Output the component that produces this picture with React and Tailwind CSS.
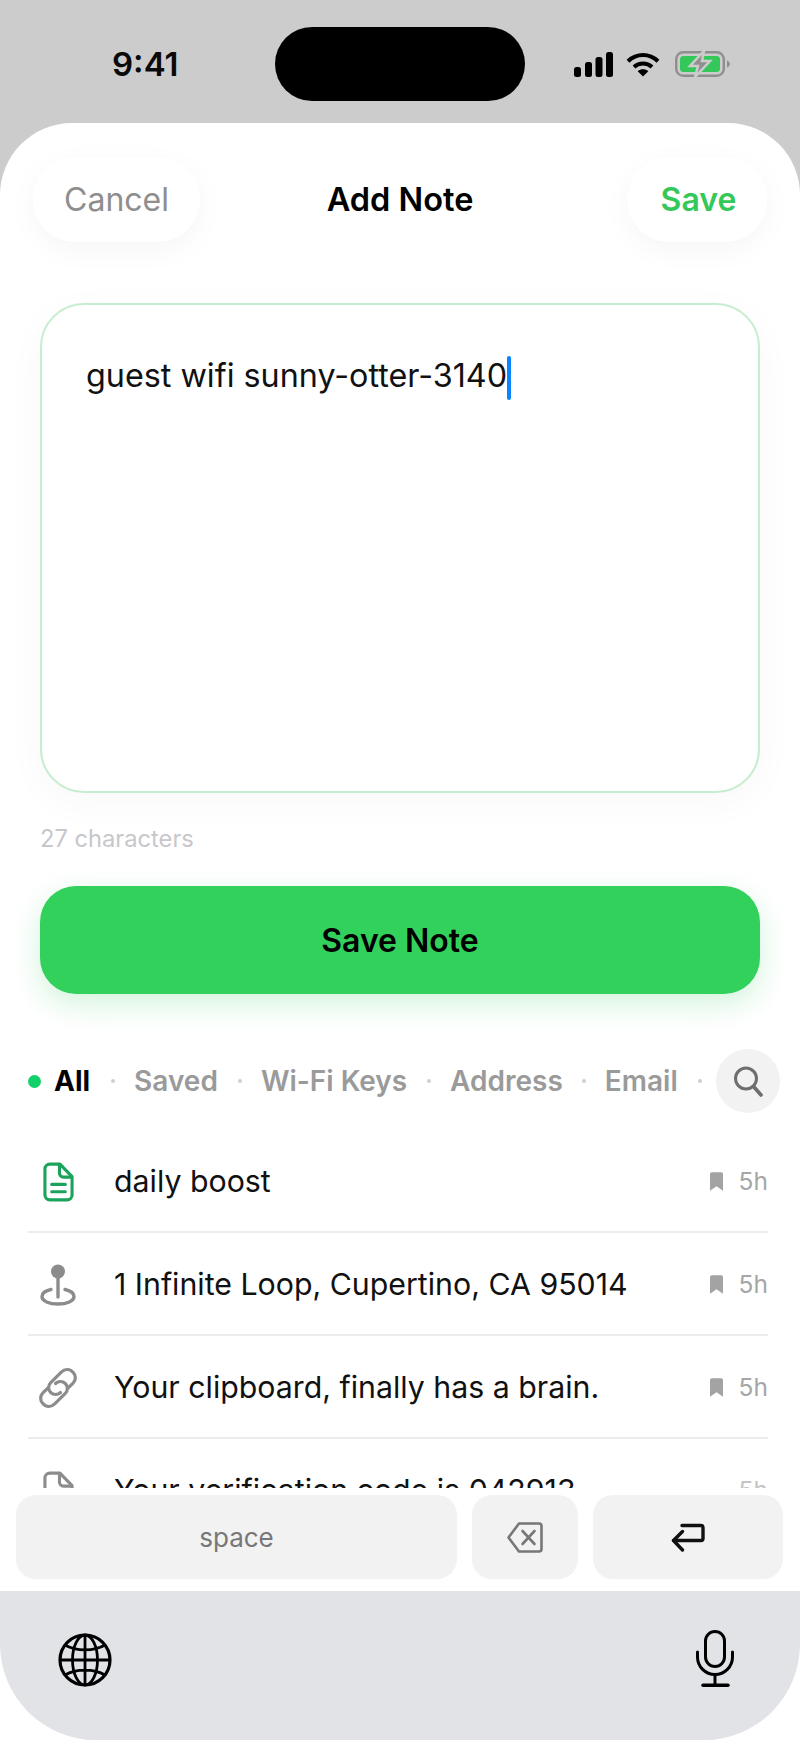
import React from "react";

const font = { fontFamily: "Inter, 'Liberation Sans', sans-serif" };

function Signal() {
  return (
    <svg width="39" height="25" viewBox="0 0 39 25" fill="#000">
      <rect x="0" y="15" width="7" height="10" rx="2.500" />
      <rect x="11" y="10" width="7" height="15" rx="2.500" />
      <rect x="21.500" y="5" width="7" height="20" rx="2.500" />
      <rect x="32" y="0" width="7" height="25" rx="2.500" />
    </svg>
  );
}
function Wifi() {
  return (
    <svg width="34" height="25" viewBox="0 0 34 25" fill="none" stroke="#000" strokeWidth="4">
      <path d="M2 9.200C10.500 1 23.500 1 32 9.200" />
      <path d="M8 15C13 10.400 21 10.400 26 15" />
      <path d="M17 24.500L11.700 19.200C14.700 16.600 19.300 16.600 22.300 19.200Z" fill="#000" stroke="none" />
    </svg>
  );
}
function Battery() {
  return (
    <svg width="56" height="26" viewBox="0 0 56 26" fill="none">
      <rect x="1.200" y="1.200" width="47.600" height="23.600" rx="7" stroke="#8f8f8f" strokeWidth="2.400" />
      <rect x="5" y="5" width="40" height="16" rx="3.500" fill="#34c759" />
      <path d="M52 9.500c1.800.5 2.800 2 2.800 3.500s-1 3-2.800 3.500z" fill="#8f8f8f" />
      <path d="M29 0L15 15h8l-3 11L35 10h-8z" fill="#8f8f8f" stroke="#cccccc" strokeWidth="2.500" />
    </svg>
  );
}
function DocIcon({ color }) {
  return (
    <svg width="31" height="40" viewBox="0 0 32 41" fill="none" stroke={color} strokeWidth="3.200" strokeLinejoin="round" strokeLinecap="round">
      <path d="M7 2h10.500L30 15v19a5 5 0 0 1-5 5H7a5 5 0 0 1-5-5V7a5 5 0 0 1 5-5z" />
      <path d="M17 2.500v9a4 4 0 0 0 4 4h8.500" />
      <path d="M9 23h14M9 30.500h14" />
    </svg>
  );
}
function PinIcon() {
  return (
    <svg width="36" height="42" viewBox="0 0 36 42" fill="none" stroke="#8c8c8c">
      <path d="M11 25.500C5.500 26.700 2 29 2 32.500C2 37 9 40 18 40s16-3 16-7.500c0-3.500-3.500-5.800-9-7" strokeWidth="3.400" strokeLinecap="round" />
      <path d="M18 12v21" strokeWidth="3.400" strokeLinecap="round" />
      <circle cx="18" cy="7.500" r="7" fill="#8c8c8c" stroke="none" />
    </svg>
  );
}
function LinkIcon() {
  return (
    <svg width="42" height="42" viewBox="0 0 42 42" fill="none" stroke="#8c8c8c" strokeWidth="3.200">
      <path d="M18.500 16.500a7 7 0 0 1 9.800 0a7 7 0 0 1 0 9.900L17.500 37a7.600 7.600 0 0 1-11.600-.4a7.600 7.600 0 0 1 0-10.800L11 21" strokeLinecap="round" />
      <path d="M23.500 25.500a7 7 0 0 1-9.800 0a7 7 0 0 1 0-9.900L24.500 5a7.600 7.600 0 0 1 11.600.4a7.600 7.600 0 0 1 0 10.800L31 21" strokeLinecap="round" />
    </svg>
  );
}
function Bookmark() {
  return (
    <svg width="13" height="19" viewBox="0 0 14 20" fill="#a3a3a3">
      <path d="M2 0h10a2 2 0 0 1 2 2v18l-7-5-7 5V2a2 2 0 0 1 2-2z" />
    </svg>
  );
}
function SearchIcon() {
  return (
    <svg width="30" height="32" viewBox="0 0 30 32" fill="none" stroke="#6e6e6e" strokeWidth="3" strokeLinecap="round">
      <circle cx="13" cy="13.500" r="10.500" />
      <path d="M21 22l7 8" strokeWidth="3.600" />
    </svg>
  );
}
function Backspace() {
  return (
    <svg width="36" height="31" viewBox="0 0 36 31" fill="none" stroke="#777" strokeWidth="2.600" strokeLinejoin="round" strokeLinecap="round">
      <path d="M12 1.500h20a2.500 2.500 0 0 1 2.500 2.500v23a2.500 2.500 0 0 1-2.500 2.500H12L1.500 15.500z" />
      <path d="M15.500 9l12 13M27.500 9l-12 13" />
    </svg>
  );
}
function ReturnIcon() {
  return (
    <svg width="34" height="29" viewBox="0 0 34 29" fill="none" stroke="#111" strokeWidth="3.400" strokeLinecap="round" strokeLinejoin="round">
      <path d="M11 2.500h19a2 2 0 0 1 2 2v11a2 2 0 0 1-2 2H2.500" />
      <path d="M11.500 8.500l-9 9 9 9.500" />
    </svg>
  );
}
function Globe() {
  return (
    <svg width="54" height="54" viewBox="0 0 54 54" fill="none" stroke="#000" strokeWidth="2.800">
      <circle cx="27" cy="27" r="25" strokeWidth="3.200" />
      <ellipse cx="27" cy="27" rx="12.500" ry="25" />
      <path d="M27 2v50M2 27h50M7 12c11 6.500 29 6.500 40 0M7 42c11-6.500 29-6.500 40 0" />
    </svg>
  );
}
function Mic() {
  return (
    <svg width="38" height="57" viewBox="0 0 38 57" fill="none" stroke="#000" strokeWidth="3" strokeLinecap="round">
      <rect x="9.500" y="1.500" width="19" height="35" rx="9.500" />
      <path d="M1.500 22v5a17.500 17.500 0 0 0 35 0v-5" />
      <path d="M19 45v10" />
      <path d="M7 55.200h25" strokeWidth="3.400" />
    </svg>
  );
}

function Dot({ ml }) {
  return <span className={`block w-[4px] h-[4px] rounded-full bg-[#cfcfcf] shrink-0 ${ml}`} />;
}

function Row({ icon, text, border = true, last = false }) {
  return (
    <div className="h-[103px] shrink-0 flex items-center relative pr-[32px]">
      <div className="w-[114px] shrink-0 flex justify-center pl-[2px]">{icon}</div>
      <div className="flex-1 text-[30.300px] text-[#111111] leading-none whitespace-nowrap">{text}</div>
      {last ? (
        <span className="text-[24.500px] text-[#c4c4c4] leading-none">5h</span>
      ) : (
        <div className="flex items-center gap-[16px] text-[24.500px] text-[#a6a6a6] leading-none">
          <Bookmark />
          <span>5h</span>
        </div>
      )}
      {border && <div className="absolute left-[28px] right-[32px] bottom-0 h-[2px] bg-[#ececec]" />}
    </div>
  );
}

export default function App() {
  return (
    <div style={font} className="w-[800px] h-[1740px] bg-[#cccccc] flex flex-col overflow-hidden">
      <div className="h-[123px] shrink-0 flex items-start pt-[27px] pl-[112px]">
        <div className="w-[163px] shrink-0 h-[74px] flex items-center pt-[1px] text-[33px] font-semibold text-[#0a0a0a] leading-none">9:41</div>
        <div className="w-[250px] h-[74px] rounded-[37px] bg-black shrink-0" />
        <div className="h-[74px] flex items-center pl-[49px] gap-[15px]">
          <Signal />
          <div className="-ml-[2px]"><Wifi /></div>
          <Battery />
        </div>
      </div>

      <div className="flex-1 min-h-0 bg-white rounded-t-[72px] flex flex-col overflow-hidden">
        <div className="h-[87px] mt-[33px] shrink-0 grid grid-cols-[1fr_auto_1fr] items-center px-[33px]">
          <div className="w-[167px] h-[85px] rounded-[42px] bg-white flex items-center justify-center pt-[1px] text-[32px] text-[#8e8e8e] shadow-[0_8px_30px_rgba(0,0,0,0.04)]">Cancel</div>
          <div className="pt-[2px] text-[32.500px] font-semibold text-black">Add Note</div>
          <div className="justify-self-end w-[140px] h-[85px] rounded-[42px] bg-white flex items-center justify-center pl-[3px] pt-[1px] text-[32px] font-semibold text-[#34c759] shadow-[0_8px_30px_rgba(0,0,0,0.04)]">Save</div>
        </div>

        <div className="mx-[40px] mt-[60px] h-[490px] shrink-0 rounded-[44px] border-2 border-[#c6edd0] bg-white pl-[44px] pt-[49px] shadow-[0_10px_40px_rgba(0,0,0,0.03)]">
          <div className="flex items-center h-[44px]">
            <span className="text-[32.300px] text-[#111111] leading-none whitespace-nowrap">guest wifi sunny-otter-3140</span>
            <span className="w-[3.500px] h-[44px] mt-[4px] bg-[#0a84ff] rounded-full" />
          </div>
        </div>

        <div className="mx-[40px] mt-[34px] text-[23.700px] leading-none text-[#c7c7cc] h-[26px]">27 characters</div>

        <div className="mx-[40px] mt-[33px] h-[108px] shrink-0 rounded-[36px] bg-[#32d15b] flex items-center justify-center pt-[1px] text-[32px] font-semibold text-black shadow-[0_10px_30px_rgba(52,199,89,0.22)]">Save Note</div>

        <div className="mt-[55px] h-[64px] shrink-0 flex items-center pl-[28px] pr-[20px]">
          <span className="w-[13px] h-[13px] rounded-full bg-[#12d06a] shrink-0" />
          <div className="flex items-center text-[28px] font-semibold text-[#9a9a9a] leading-none">
            <span className="ml-[13px] text-black font-bold">All</span>
            <Dot ml="ml-[21px]" />
            <span className="ml-[19px]">Saved</span>
            <Dot ml="ml-[20px]" />
            <span className="ml-[19px]">Wi-Fi Keys</span>
            <Dot ml="ml-[20px]" />
            <span className="ml-[19px]">Address</span>
            <Dot ml="ml-[19px]" />
            <span className="ml-[19px]">Email</span>
            <Dot ml="ml-[20px]" />
          </div>
          <div className="ml-auto w-[64px] h-[64px] rounded-full bg-[#f2f2f2] flex items-center justify-center">
            <SearchIcon />
          </div>
        </div>

        <div className="h-[358px] shrink-0 overflow-hidden mt-[17px] flex flex-col">
          <Row icon={<DocIcon color="#1aa35a" />} text="daily boost" />
          <Row icon={<PinIcon />} text="1 Infinite Loop, Cupertino, CA 95014" />
          <Row icon={<LinkIcon />} text="Your clipboard, finally has a brain." />
          <Row icon={<DocIcon color="#8c8c8c" />} text="Your verification code is 042913" border={false} last />
        </div>

        <div className="shrink-0 bg-white pt-[7px] pb-[12px] pl-[16px] pr-[17px] flex gap-[15px]">
          <div className="w-[441px] h-[84px] rounded-[20px] bg-[#f2f2f3] flex items-center justify-center text-[26px] text-[#777777]">space</div>
          <div className="w-[106px] h-[84px] rounded-[20px] bg-[#f2f2f3] flex items-center justify-center"><Backspace /></div>
          <div className="flex-1 h-[84px] rounded-[20px] bg-[#f2f2f3] flex items-center justify-center"><ReturnIcon /></div>
        </div>

        <div className="flex-1 min-h-0 bg-[#e1e3e6] rounded-b-[96px] flex items-start justify-between pl-[58px] pr-[66px] pt-[39px]">
          <div className="mt-[3px]"><Globe /></div>
          <Mic />
        </div>
      </div>
    </div>
  );
}
